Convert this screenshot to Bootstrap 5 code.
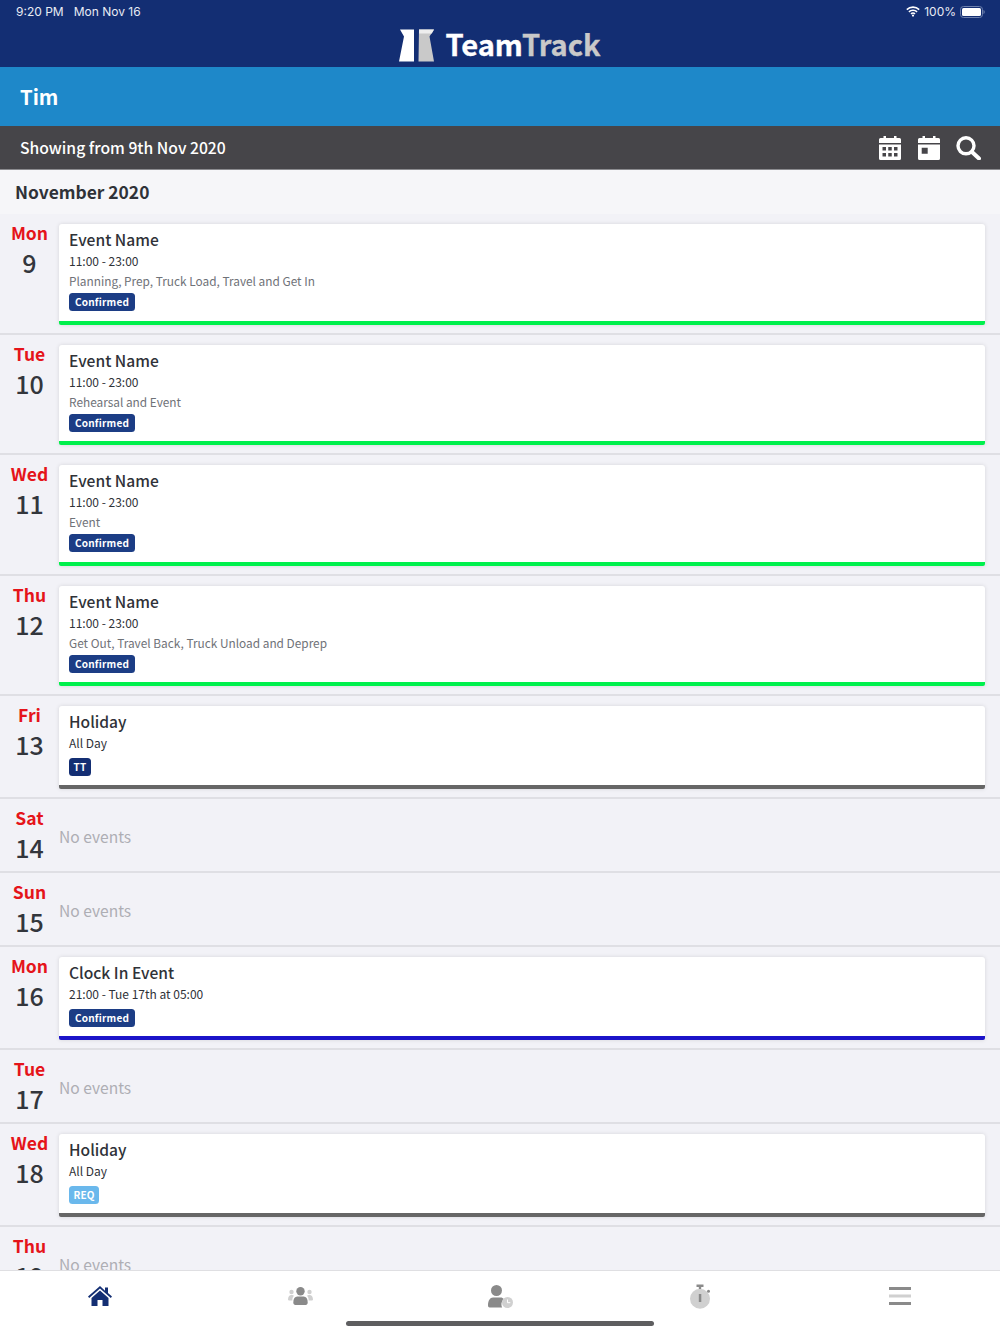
<!DOCTYPE html>
<html lang="en">
<head>
<meta charset="utf-8">
<title>TeamTrack</title>
<link href="https://cdn.jsdelivr.net/npm/bootstrap@5.3.0/dist/css/bootstrap.min.css" rel="stylesheet">
<style>
html,body{height:1334px;overflow:hidden}
body{font-family:"Noto Sans CJK JP","Liberation Sans",sans-serif;background:#f2f2f7;color:#2f3238}
.app-top{background:#132e73;height:67px;color:#fff}
.status-line{height:23px;padding:0 15px 0 16px;font:12px/23px Inter,"Liberation Sans",sans-serif;color:#e8ebf3}
.brand-line{height:44px}
.brand-word{font-size:29.1px;line-height:44px;font-weight:700;color:#fff;margin-left:11px;padding-bottom:4px;-webkit-text-stroke:.35px #fff}
.brand-word span{color:#c9c9c9;-webkit-text-stroke:.35px #c9c9c9}
.name-band{background:#1e88c9;height:59px;padding-left:20px;font-size:20.3px;font-weight:700;color:#fff;line-height:59px}
.range-band{background:#464549;height:44px;padding:0 19px 0 20px;border-bottom:1px solid #8b8b8f;color:#fff;font-size:15.7px;font-weight:500}
.list-area{min-height:0;overflow:hidden}
.month-head{height:44px;background:#f6f6f9;padding-left:15px;font-size:17.4px;font-weight:700;line-height:43px}
.day-row{border-bottom:2px solid #dfdfe4;padding:10px 15px 8px 0}
.day-col{width:59px;flex:none;text-align:center}
.day-name{color:#e5141a;font-weight:700;font-size:17.5px;line-height:18px}
.day-num{font-size:25px;line-height:41px;font-weight:500;color:#33363c}
.ev-card{background:#fff;border-radius:3px 3px 2px 2px;border-bottom:4px solid #666;box-shadow:0 0 4px rgba(0,0,0,.12);padding:4px 10px 9px;height:100.5px}
.ev-short{height:83px}
.bar-green{border-bottom-color:#00f04c}
.bar-blue{border-bottom-color:#1c14c9}
.ev-title{font-size:15.6px;font-weight:500;line-height:22px}
.ev-time{font-size:12px;line-height:22px}
.ev-desc{font-size:11.85px;line-height:18px;color:#6f7278}
.tag{display:inline-block;font-size:10px;font-weight:700;line-height:18px;height:18px;padding:0 6px;border-radius:3.5px;color:#fff;background:#1c3d85;margin-top:3px;letter-spacing:.2px;vertical-align:top}
.ev-short .tag{margin-top:4px}
.ev-short .tag-tt,.ev-short .tag-req{padding:0 4.5px}
.tag-tt{background:#132e73}
.tag-req{background:#6ab8ec}
.empty-row{height:74px}
.no-ev{color:#aeaeb4;font-size:15.6px;line-height:26px;margin-top:14px}
.tab-bar{height:64px;background:#fff;border-top:1px solid #dfdfe2;z-index:2}
.tab-item{width:200px;height:50px}
.home-pill{position:absolute;left:346px;bottom:8px;width:308px;height:5px;border-radius:3px;background:#5e5e60;z-index:3}
</style>
</head>
<body class="d-flex flex-column position-relative">
<header class="app-top flex-shrink-0">
  <div class="status-line d-flex justify-content-between">
    <div class="d-flex" style="gap:10px"><span>9:20 PM</span><span>Mon Nov 16</span></div>
    <div class="d-flex align-items-center gap-1">
      <svg width="14" height="11" viewBox="0 0 14 11" fill="none" stroke="#fff" stroke-width="1.6"><path d="M.8 3.6a9 9 0 0 1 12.4 0M2.9 5.8a6 6 0 0 1 8.2 0M5 7.9a3 3 0 0 1 4 0"/><circle cx="7" cy="9.6" r="1.1" fill="#fff" stroke="none"/></svg>
      <span>100%</span>
      <svg width="25" height="12" viewBox="0 0 25 12"><rect x=".5" y=".5" width="22" height="11" rx="3" fill="none" stroke="#6d80ad"/><rect x="2" y="2" width="19" height="8" rx="1.5" fill="#fff"/><path d="M23.5 4v4c.8-.3 1.2-1 1.2-2s-.4-1.7-1.2-2z" fill="#6d80ad"/></svg>
    </div>
  </div>
  <div class="brand-line d-flex justify-content-center align-items-center">
    <svg width="35" height="33" viewBox="0 0 35 33"><path fill="#c9c9c9" d="M20 .5H35L30.500 7.500l4.500 25H19.500z"/><path fill="#fff" d="M1 .5H15V32.500H0L5 7.500z"/><path fill="#eee" d="M20 .5H35L32.800 4.500H20z"/></svg>
    <span class="brand-word">Team<span>Track</span></span>
  </div>
</header>
<div class="name-band flex-shrink-0">Tim</div>
<div class="range-band flex-shrink-0 d-flex align-items-center justify-content-between">
  <span>Showing from 9th Nov 2020</span>
  <div class="d-flex align-items-center" style="gap:16.500px">
    <svg width="22" height="24" viewBox="0 0 22 24" fill="#fff"><path d="M4.500 0h2.500v3H4.500zM15 0h2.500v3H15zM1.500 2h19A1.500 1.500 0 0 1 22 3.500V7H0V3.500A1.500 1.500 0 0 1 1.500 2z"/><path fill-rule="evenodd" d="M0 8.500h22V22.500A1.500 1.500 0 0 1 20.500 24H1.500A1.500 1.500 0 0 1 0 22.500zM3.500 11v3.500h3.500V11zm5.750 0v3.500h3.500V11zm5.750 0v3.500h3.500V11zM3.500 17v3.500h3.500V17zm5.750 0v3.500h3.500V17zm5.750 0v3.500h3.500V17z"/></svg>
    <svg width="22" height="24" viewBox="0 0 22 24" fill="#fff"><path d="M4.500 0h2.500v3H4.500zM15 0h2.500v3H15zM1.500 2h19A1.500 1.500 0 0 1 22 3.500V7H0V3.500A1.500 1.500 0 0 1 1.500 2z"/><path fill-rule="evenodd" d="M0 8.500h22V22.500A1.500 1.500 0 0 1 20.500 24H1.500A1.500 1.500 0 0 1 0 22.500zM3.700 11.700v6h6v-6z"/></svg>
    <svg width="25" height="24" viewBox="0 0 25 24" fill="none" stroke="#fff"><circle cx="10" cy="9.800" r="8" stroke-width="3.400"/><path d="M16 16l7 6.500" stroke-width="4" stroke-linecap="round"/></svg>
  </div>
</div>
<main class="list-area flex-grow-1">
  <div class="month-head">November 2020</div>

  <div class="day-row d-flex">
    <div class="day-col"><div class="day-name">Mon</div><div class="day-num">9</div></div>
    <div class="ev-card bar-green flex-grow-1"><div class="ev-title">Event Name</div><div class="ev-time">11:00 - 23:00</div><div class="ev-desc">Planning, Prep, Truck Load, Travel and Get In</div><span class="tag">Confirmed</span></div>
  </div>
  <div class="day-row d-flex">
    <div class="day-col"><div class="day-name">Tue</div><div class="day-num">10</div></div>
    <div class="ev-card bar-green flex-grow-1"><div class="ev-title">Event Name</div><div class="ev-time">11:00 - 23:00</div><div class="ev-desc">Rehearsal and Event</div><span class="tag">Confirmed</span></div>
  </div>
  <div class="day-row d-flex">
    <div class="day-col"><div class="day-name">Wed</div><div class="day-num">11</div></div>
    <div class="ev-card bar-green flex-grow-1"><div class="ev-title">Event Name</div><div class="ev-time">11:00 - 23:00</div><div class="ev-desc">Event</div><span class="tag">Confirmed</span></div>
  </div>
  <div class="day-row d-flex">
    <div class="day-col"><div class="day-name">Thu</div><div class="day-num">12</div></div>
    <div class="ev-card bar-green flex-grow-1"><div class="ev-title">Event Name</div><div class="ev-time">11:00 - 23:00</div><div class="ev-desc">Get Out, Travel Back, Truck Unload and Deprep</div><span class="tag">Confirmed</span></div>
  </div>
  <div class="day-row d-flex">
    <div class="day-col"><div class="day-name">Fri</div><div class="day-num">13</div></div>
    <div class="ev-card ev-short flex-grow-1"><div class="ev-title">Holiday</div><div class="ev-time">All Day</div><span class="tag tag-tt">TT</span></div>
  </div>
  <div class="day-row empty-row d-flex">
    <div class="day-col"><div class="day-name">Sat</div><div class="day-num">14</div></div>
    <div class="no-ev">No events</div>
  </div>
  <div class="day-row empty-row d-flex">
    <div class="day-col"><div class="day-name">Sun</div><div class="day-num">15</div></div>
    <div class="no-ev">No events</div>
  </div>
  <div class="day-row d-flex">
    <div class="day-col"><div class="day-name">Mon</div><div class="day-num">16</div></div>
    <div class="ev-card ev-short bar-blue flex-grow-1"><div class="ev-title">Clock In Event</div><div class="ev-time">21:00 - Tue 17th at 05:00</div><span class="tag">Confirmed</span></div>
  </div>
  <div class="day-row empty-row d-flex">
    <div class="day-col"><div class="day-name">Tue</div><div class="day-num">17</div></div>
    <div class="no-ev">No events</div>
  </div>
  <div class="day-row d-flex">
    <div class="day-col"><div class="day-name">Wed</div><div class="day-num">18</div></div>
    <div class="ev-card ev-short flex-grow-1"><div class="ev-title">Holiday</div><div class="ev-time">All Day</div><span class="tag tag-req">REQ</span></div>
  </div>
  <div class="day-row empty-row d-flex">
    <div class="day-col"><div class="day-name">Thu</div><div class="day-num">19</div></div>
    <div class="no-ev">No events</div>
  </div>
</main>
<nav class="tab-bar flex-shrink-0 d-flex align-items-start">
  <div class="tab-item d-flex align-items-center justify-content-center">
    <svg width="24" height="20" viewBox="0 0 24 20" fill="#132e73"><path d="M12 0L0 10.500l1.200 1.400L12 2.600l10.800 9.300 1.200-1.400-4-3.500V1.500h-3v3.200z"/><path d="M12 4.500L3.500 12v8h6v-6h5v6h6v-8z"/></svg>
  </div>
  <div class="tab-item d-flex align-items-center justify-content-center">
    <svg width="25" height="18" viewBox="0 0 25 18"><g fill="#d0d0d0"><circle cx="3.500" cy="5" r="2.200"/><circle cx="21.500" cy="5" r="2.200"/><path d="M0 13c0-3.500 1.300-5 3.500-5 1 0 2 .3 2.500.8C4.800 10 4.300 11.500 4.300 13.500H1zM25 13c0-3.500-1.300-5-3.500-5-1 0-2 .3-2.500.8 1.200 1.200 1.700 2.700 1.700 4.700H24z"/></g><g fill="#8a8a8a"><circle cx="12.500" cy="4.300" r="4.200"/><path d="M5.300 15.500c0-4 1.500-6 4-6h6.400c2.500 0 4 2 4 6 0 1.500-.8 2.500-2 2.500H7.300c-1.200 0-2-1-2-2.500z"/></g></svg>
  </div>
  <div class="tab-item d-flex align-items-center justify-content-center">
    <svg width="25" height="23" viewBox="0 0 25 23"><g fill="#8a8a8a"><circle cx="8.500" cy="5.500" r="5.500"/><path d="M0 20.500c0-5 2-8 5-8h7.500c1.500 0 2.600.6 3.400 1.700-1.800 1.400-2.800 3.600-2.400 6.300.1.800.3 1.500.7 2H1.700C.7 22.500 0 21.500 0 20.500z"/></g><circle cx="19.500" cy="17.500" r="5.500" fill="#d0d0d0"/><path d="M19.500 14.500v3.200h2.800" fill="none" stroke="#fff"/></svg>
  </div>
  <div class="tab-item d-flex align-items-center justify-content-center">
    <svg width="21" height="25" viewBox="0 0 21 25"><circle cx="10" cy="14.800" r="10" fill="#d0d0d0"/><rect x="8.800" y="10" width="2.500" height="8" fill="#8a8a8a"/><path fill="#8a8a8a" d="M6.500.5h7v2.500h-2.300v2h-2.400V3H6.500z"/><circle cx="18.500" cy="7.300" r="1.500" fill="#8a8a8a"/></svg>
  </div>
  <div class="tab-item d-flex align-items-center justify-content-center">
    <svg width="22" height="20" viewBox="0 0 22 20"><rect y="1" width="22" height="3" fill="#8a8a8a"/><rect y="8.500" width="22" height="3" fill="#d0d0d0"/><rect y="16" width="22" height="3" fill="#8a8a8a"/></svg>
  </div>
</nav>
<div class="home-pill"></div>
<script src="https://cdn.jsdelivr.net/npm/bootstrap@5.3.0/dist/js/bootstrap.bundle.min.js"></script>
</body>
</html>
